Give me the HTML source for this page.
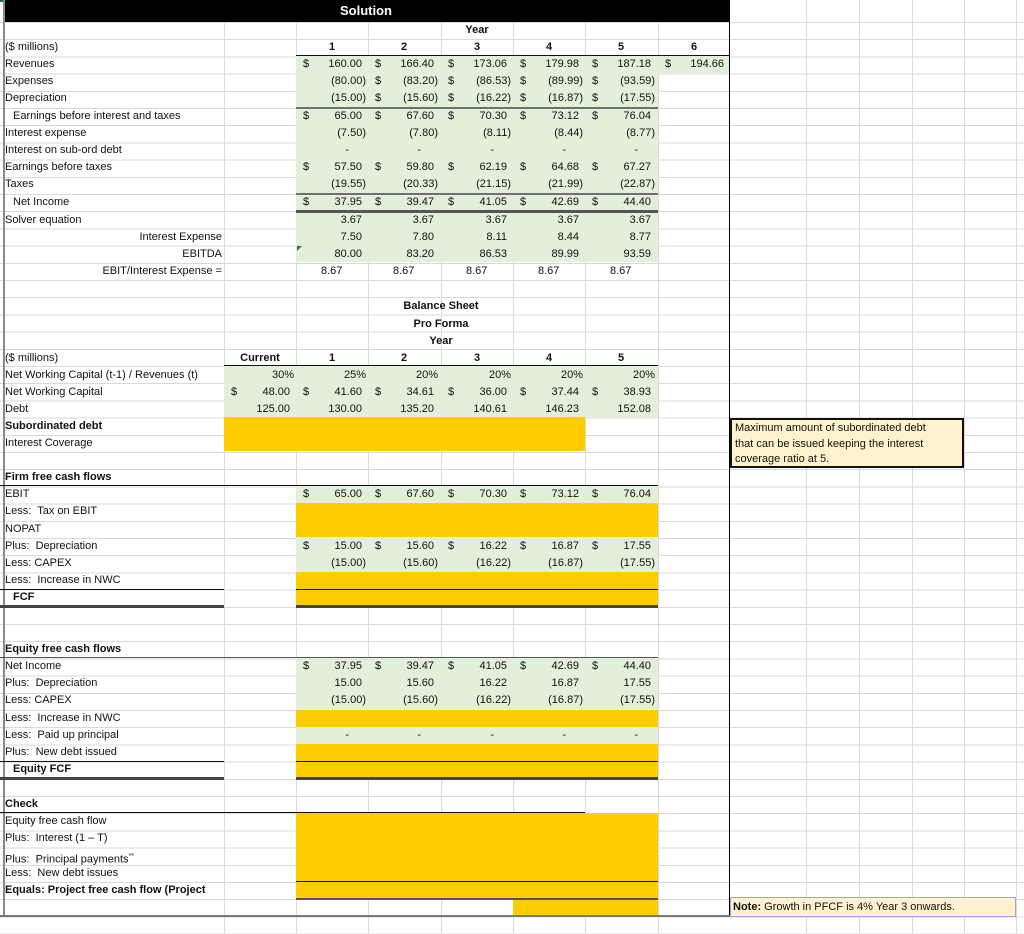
<!DOCTYPE html>
<html><head><meta charset="utf-8"><style>
*{margin:0;padding:0;box-sizing:border-box}
body{width:1024px;height:933px;position:relative;overflow:hidden;background:#fff;font-family:"Liberation Sans",Arial,sans-serif;font-size:11px;color:#111}
#grid{position:absolute;left:0;top:21.5px;width:1024px;height:912px;
background-image:repeating-linear-gradient(to bottom,#d9d9d9 0,#d9d9d9 1px,transparent 1px,transparent 17.2px)}
.vl{position:absolute;top:0;width:1px;height:933px;background:#d9d9d9}
.f{position:absolute}
.g{background:#e2efda}
.y{background:#ffcc00}
.hl{position:absolute;height:1px;background:#111}
.t{position:absolute;left:5px;height:17px;line-height:17px;white-space:nowrap}
.b{font-weight:bold}
.r{position:absolute;left:0;width:1024px;height:17px;line-height:17px}
.c{position:absolute;width:72px;height:17px;text-align:right;padding-right:6px;white-space:nowrap}
.c.q{padding-right:2px}
.c.d{padding-right:19px}
.c i{font-style:normal;position:absolute;left:7px}
.k0{left:224px}.k1{left:296px}.k2{left:368px}.k3{left:441px}.k4{left:513px}.k5{left:585px}.k6{left:658px}
.h{position:absolute;width:72px;text-align:center;font-weight:bold}
.m{position:absolute;width:72px;padding-left:25px}
</style></head><body>
<div id="grid"></div>
<div class="vl" style="left:224px"></div><div class="vl" style="left:296px"></div><div class="vl" style="left:368px"></div><div class="vl" style="left:441px"></div><div class="vl" style="left:513px"></div><div class="vl" style="left:585px"></div><div class="vl" style="left:658px"></div><div class="vl" style="left:806px"></div><div class="vl" style="left:859px"></div><div class="vl" style="left:912px"></div><div class="vl" style="left:964px"></div><div class="vl" style="left:1016px"></div>
<div class="f g" style="left:296px;top:56px;width:362px;height:206px"></div>
<div class="f g" style="left:658px;top:56px;width:71px;height:17px"></div>
<div class="f g" style="left:224px;top:366px;width:434px;height:51px"></div>
<div class="f y" style="left:224px;top:417px;width:361px;height:34px"></div>
<div class="f g" style="left:296px;top:486px;width:362px;height:17px"></div>
<div class="f y" style="left:296px;top:503px;width:362px;height:34px"></div>
<div class="f g" style="left:296px;top:537px;width:362px;height:35px"></div>
<div class="f y" style="left:296px;top:572px;width:362px;height:34px"></div>
<div class="f g" style="left:296px;top:658px;width:362px;height:52px"></div>
<div class="f y" style="left:296px;top:710px;width:362px;height:17px"></div>
<div class="f g" style="left:296px;top:727px;width:362px;height:17px"></div>
<div class="f y" style="left:296px;top:744px;width:362px;height:34px"></div>
<div class="f y" style="left:296px;top:813px;width:362px;height:86px"></div>
<div class="f y" style="left:513px;top:899px;width:145px;height:17px"></div>
<div class="f" style="left:0;top:0;width:224px;height:2px;background:#217346"></div>
<div class="f" style="left:3px;top:0;width:726px;height:21.5px;background:#000;color:#fff;font-weight:bold;font-size:13px;text-align:center;line-height:21px">Solution</div>
<div class="f" style="left:3px;top:0;width:2px;height:917px;background:#8a8a8a"></div>
<div class="f" style="left:729px;top:0;width:1px;height:917px;background:#000"></div>
<div class="hl" style="left:296px;top:55px;width:434px"></div>
<div class="hl" style="left:296px;top:107px;width:362px;height:2px;background:#707070"></div>
<div class="hl" style="left:296px;top:193px;width:362px;height:2px;background:#707070"></div>
<div class="hl" style="left:296px;top:210px;width:362px;height:3px;background:#555"></div>
<div class="hl" style="left:224px;top:365px;width:434px"></div>
<div class="hl" style="left:0;top:485px;width:658px"></div>
<div class="hl" style="left:0;top:589px;width:224px"></div><div class="hl" style="left:296px;top:589px;width:362px"></div>
<div class="hl" style="left:0;top:605px;width:224px;height:3px;background:#444"></div><div class="hl" style="left:296px;top:605px;width:362px;height:3px;background:#444"></div>
<div class="hl" style="left:0;top:657px;width:658px;background:#555"></div>
<div class="hl" style="left:0;top:761px;width:224px"></div><div class="hl" style="left:296px;top:761px;width:362px"></div>
<div class="hl" style="left:0;top:777px;width:224px;height:3px;background:#444"></div><div class="hl" style="left:296px;top:777px;width:362px;height:3px;background:#444"></div>
<div class="hl" style="left:0;top:812px;width:585px"></div>
<div class="hl" style="left:296px;top:881px;width:362px"></div>
<div class="hl" style="left:296px;top:898px;width:362px;height:2px;background:#555"></div>
<div class="hl" style="left:0;top:915px;width:730px;height:2px;background:#777"></div>
<div class="f" style="left:297px;top:246px;width:0;height:0;border-top:5px solid #2a7d2a;border-right:5px solid transparent"></div>

<div class="r" style="top:21.5px"><div class="h k3">Year</div></div>
<div class="r" style="top:38.7px"><div class="t">($ millions)</div><div class="h k1">1</div><div class="h k2">2</div><div class="h k3">3</div><div class="h k4">4</div><div class="h k5">5</div><div class="h k6">6</div></div>
<div class="r" style="top:55.9px"><div class="t">Revenues</div><div class="c k1"><i>$</i>160.00</div><div class="c k2"><i>$</i>166.40</div><div class="c k3"><i>$</i>173.06</div><div class="c k4"><i>$</i>179.98</div><div class="c k5"><i>$</i>187.18</div><div class="c k6"><i>$</i>194.66</div></div>
<div class="r" style="top:73.1px"><div class="t">Expenses</div><div class="c q k1">(80.00)</div><div class="c q k2"><i>$</i>(83.20)</div><div class="c q k3"><i>$</i>(86.53)</div><div class="c q k4"><i>$</i>(89.99)</div><div class="c q k5"><i>$</i>(93.59)</div></div>
<div class="r" style="top:90.3px"><div class="t">Depreciation</div><div class="c q k1">(15.00)</div><div class="c q k2"><i>$</i>(15.60)</div><div class="c q k3"><i>$</i>(16.22)</div><div class="c q k4"><i>$</i>(16.87)</div><div class="c q k5"><i>$</i>(17.55)</div></div>
<div class="r" style="top:107.5px"><div class="t" style="left:13px">Earnings before interest and taxes</div><div class="c k1"><i>$</i>65.00</div><div class="c k2"><i>$</i>67.60</div><div class="c k3"><i>$</i>70.30</div><div class="c k4"><i>$</i>73.12</div><div class="c k5"><i>$</i>76.04</div></div>
<div class="r" style="top:124.7px"><div class="t">Interest expense</div><div class="c q k1">(7.50)</div><div class="c q k2">(7.80)</div><div class="c q k3">(8.11)</div><div class="c q k4">(8.44)</div><div class="c q k5">(8.77)</div></div>
<div class="r" style="top:141.9px"><div class="t">Interest on sub-ord debt</div><div class="c d k1">-</div><div class="c d k2">-</div><div class="c d k3">-</div><div class="c d k4">-</div><div class="c d k5">-</div></div>
<div class="r" style="top:159.1px"><div class="t">Earnings before taxes</div><div class="c k1"><i>$</i>57.50</div><div class="c k2"><i>$</i>59.80</div><div class="c k3"><i>$</i>62.19</div><div class="c k4"><i>$</i>64.68</div><div class="c k5"><i>$</i>67.27</div></div>
<div class="r" style="top:176.3px"><div class="t">Taxes</div><div class="c q k1">(19.55)</div><div class="c q k2">(20.33)</div><div class="c q k3">(21.15)</div><div class="c q k4">(21.99)</div><div class="c q k5">(22.87)</div></div>
<div class="r" style="top:193.5px"><div class="t" style="left:13px">Net Income</div><div class="c k1"><i>$</i>37.95</div><div class="c k2"><i>$</i>39.47</div><div class="c k3"><i>$</i>41.05</div><div class="c k4"><i>$</i>42.69</div><div class="c k5"><i>$</i>44.40</div></div>
<div class="r" style="top:212px"><div class="t">Solver equation</div><div class="c k1">3.67</div><div class="c k2">3.67</div><div class="c k3">3.67</div><div class="c k4">3.67</div><div class="c k5">3.67</div></div>
<div class="r" style="top:229px"><div class="t" style="left:0;width:222px;text-align:right">Interest Expense</div><div class="c k1">7.50</div><div class="c k2">7.80</div><div class="c k3">8.11</div><div class="c k4">8.44</div><div class="c k5">8.77</div></div>
<div class="r" style="top:246px"><div class="t" style="left:0;width:222px;text-align:right">EBITDA</div><div class="c k1">80.00</div><div class="c k2">83.20</div><div class="c k3">86.53</div><div class="c k4">89.99</div><div class="c k5">93.59</div></div>
<div class="r" style="top:263px"><div class="t" style="left:0;width:222px;text-align:right">EBIT/Interest Expense =</div><div class="m k1">8.67</div><div class="m k2">8.67</div><div class="m k3">8.67</div><div class="m k4">8.67</div><div class="m k5">8.67</div></div>

<div class="r" style="top:298px"><div class="f b" style="left:224px;width:434px;text-align:center">Balance Sheet</div></div>
<div class="r" style="top:315.5px"><div class="f b" style="left:224px;width:434px;text-align:center">Pro Forma</div></div>
<div class="r" style="top:332.5px"><div class="f b" style="left:224px;width:434px;text-align:center">Year</div></div>
<div class="r" style="top:349.5px"><div class="t">($ millions)</div><div class="h k0">Current</div><div class="h k1">1</div><div class="h k2">2</div><div class="h k3">3</div><div class="h k4">4</div><div class="h k5">5</div></div>
<div class="r" style="top:366.5px"><div class="t">Net Working Capital (t-1) / Revenues (t)</div><div class="c q k0">30%</div><div class="c q k1">25%</div><div class="c q k2">20%</div><div class="c q k3">20%</div><div class="c q k4">20%</div><div class="c q k5">20%</div></div>
<div class="r" style="top:383.5px"><div class="t">Net Working Capital</div><div class="c k0"><i>$</i>48.00</div><div class="c k1"><i>$</i>41.60</div><div class="c k2"><i>$</i>34.61</div><div class="c k3"><i>$</i>36.00</div><div class="c k4"><i>$</i>37.44</div><div class="c k5"><i>$</i>38.93</div></div>
<div class="r" style="top:400.5px"><div class="t">Debt</div><div class="c k0">125.00</div><div class="c k1">130.00</div><div class="c k2">135.20</div><div class="c k3">140.61</div><div class="c k4">146.23</div><div class="c k5">152.08</div></div>
<div class="r" style="top:417.5px"><div class="t b">Subordinated debt</div></div>
<div class="r" style="top:434.5px"><div class="t">Interest Coverage</div></div>

<div class="f" style="left:730px;top:418px;width:234px;height:50px;background:#fff2cc;border:2px solid #111;padding:1px 3px;line-height:15.5px;font-size:11px;white-space:nowrap">Maximum amount of subordinated debt<br>that can be issued keeping the interest<br>coverage ratio at 5.</div>

<div class="r" style="top:469px"><div class="t b">Firm free cash flows</div></div>
<div class="r" style="top:486px"><div class="t">EBIT</div><div class="c k1"><i>$</i>65.00</div><div class="c k2"><i>$</i>67.60</div><div class="c k3"><i>$</i>70.30</div><div class="c k4"><i>$</i>73.12</div><div class="c k5"><i>$</i>76.04</div></div>
<div class="r" style="top:503px"><div class="t">Less:&nbsp; Tax on EBIT</div></div>
<div class="r" style="top:520.5px"><div class="t">NOPAT</div></div>
<div class="r" style="top:537.5px"><div class="t">Plus:&nbsp; Depreciation</div><div class="c k1"><i>$</i>15.00</div><div class="c k2"><i>$</i>15.60</div><div class="c k3"><i>$</i>16.22</div><div class="c k4"><i>$</i>16.87</div><div class="c k5"><i>$</i>17.55</div></div>
<div class="r" style="top:554.5px"><div class="t">Less: CAPEX</div><div class="c q k1">(15.00)</div><div class="c q k2">(15.60)</div><div class="c q k3">(16.22)</div><div class="c q k4">(16.87)</div><div class="c q k5">(17.55)</div></div>
<div class="r" style="top:572px"><div class="t">Less:&nbsp; Increase in NWC</div></div>
<div class="r" style="top:589px"><div class="t b" style="left:13px">FCF</div></div>

<div class="r" style="top:641px"><div class="t b">Equity free cash flows</div></div>
<div class="r" style="top:658px"><div class="t">Net Income</div><div class="c k1"><i>$</i>37.95</div><div class="c k2"><i>$</i>39.47</div><div class="c k3"><i>$</i>41.05</div><div class="c k4"><i>$</i>42.69</div><div class="c k5"><i>$</i>44.40</div></div>
<div class="r" style="top:675px"><div class="t">Plus:&nbsp; Depreciation</div><div class="c k1">15.00</div><div class="c k2">15.60</div><div class="c k3">16.22</div><div class="c k4">16.87</div><div class="c k5">17.55</div></div>
<div class="r" style="top:692px"><div class="t">Less: CAPEX</div><div class="c q k1">(15.00)</div><div class="c q k2">(15.60)</div><div class="c q k3">(16.22)</div><div class="c q k4">(16.87)</div><div class="c q k5">(17.55)</div></div>
<div class="r" style="top:709.5px"><div class="t">Less:&nbsp; Increase in NWC</div></div>
<div class="r" style="top:726.5px"><div class="t">Less:&nbsp; Paid up principal</div><div class="c d k1">-</div><div class="c d k2">-</div><div class="c d k3">-</div><div class="c d k4">-</div><div class="c d k5">-</div></div>
<div class="r" style="top:744px"><div class="t">Plus:&nbsp; New debt issued</div></div>
<div class="r" style="top:761px"><div class="t b" style="left:13px">Equity FCF</div></div>

<div class="r" style="top:796px"><div class="t b">Check</div></div>
<div class="r" style="top:813px"><div class="t">Equity free cash flow</div></div>
<div class="r" style="top:830px"><div class="t">Plus:&nbsp; Interest (1 – T)</div></div>
<div class="r" style="top:848px"><div class="t">Plus:&nbsp; Principal payments<sup style="font-size:7px">**</sup></div></div>
<div class="r" style="top:864.5px"><div class="t">Less:&nbsp; New debt issues</div></div>
<div class="r" style="top:881.5px"><div class="t b">Equals: Project free cash flow (Project</div></div>

<div class="f" style="left:730px;top:897px;width:286px;height:20px;background:#fff2cc;border:1px solid #9aa3e0;padding-left:2px;line-height:18px;font-size:11px;white-space:nowrap"><b>Note:</b> Growth in PFCF is 4% Year 3 onwards.</div>
</body></html>
